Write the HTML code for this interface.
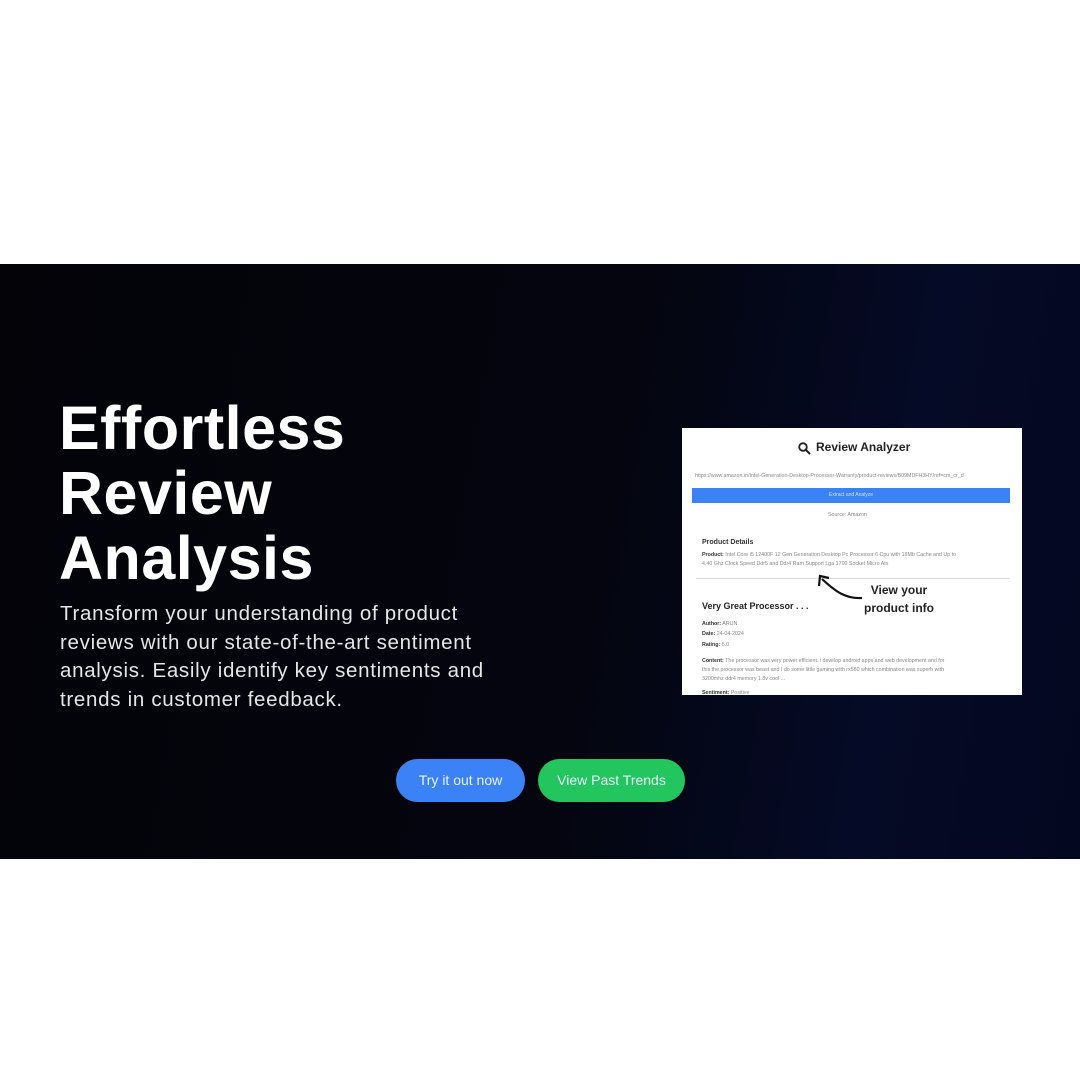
<!DOCTYPE html>
<html><head><meta charset="utf-8"><style>
*{margin:0;padding:0;box-sizing:border-box}
body{width:1080px;height:1080px;background:#fff;position:relative;overflow:hidden;font-family:"Liberation Sans",sans-serif}
.band{position:absolute;left:0;top:264px;width:1080px;height:595px;background:linear-gradient(100deg,#030308 0%,#04050f 55%,#050a26 80%,#040720 100%)}
h1{position:absolute;left:59px;top:396px;font-size:61px;line-height:65px;color:#fff;font-weight:bold;letter-spacing:0.5px}
p.d{position:absolute;left:60px;top:600px;width:480px;font-size:20.5px;line-height:28.5px;color:#e6e6e6;white-space:nowrap;letter-spacing:0.7px}
.panel{position:absolute;left:682px;top:428px;width:340px;height:267px;background:#fff;overflow:hidden;color:#333}
.btn{position:absolute;top:759px;height:43px;border-radius:22px;color:#e8f0ff;font-size:14px;line-height:43px;text-align:center}
.s{position:absolute;font-size:5.3px;color:#888;white-space:nowrap}
.b{font-weight:bold;color:#333}
</style></head><body>
<div class="band"></div>
<h1>Effortless<br>Review<br>Analysis</h1>
<p class="d">Transform your understanding of product<br>reviews with our state-of-the-art sentiment<br>analysis. Easily identify key sentiments and<br>trends in customer feedback.</p>
<div class="panel">
 <svg style="position:absolute;left:116px;top:14px" width="13" height="13" viewBox="0 0 13 13"><circle cx="5" cy="5" r="3.8" fill="none" stroke="#222" stroke-width="1.8"/><path d="M8 8L12 12" stroke="#222" stroke-width="2"/></svg>
 <div style="position:absolute;left:134px;top:12px;font-size:12px;font-weight:bold;color:#222">Review Analyzer</div>
 <div class="s" style="left:13px;top:45px">https://www.amazon.in/Intel-Generation-Desktop-Processor-Warranty/product-reviews/B09MDFH3HY/ref=cm_cr_d</div>
 <div style="position:absolute;left:10px;top:60px;width:318px;height:15px;background:#3b82f6;color:#cfe0ff;font-size:5px;text-align:center;line-height:15px">Extract and Analyze</div>
 <div class="s" style="left:146px;top:84px">Source: Amazon</div>
 <div style="position:absolute;left:20px;top:111px;font-size:7px;font-weight:bold;color:#333">Product Details</div>
 <div class="s" style="left:20px;top:124px"><span class="b">Product:</span> Intel Core i5 12400F 12 Gen Generation Desktop Pc Processor 6 Cpu with 18Mb Cache and Up to</div>
 <div class="s" style="left:20px;top:133px">4.40 Ghz Clock Speed Ddr5 and Ddr4 Ram Support Lga 1700 Socket Micro Atx</div>
 <div style="position:absolute;left:14px;top:150px;width:314px;border-top:1px solid #ddd"></div>
 <svg style="position:absolute;left:134px;top:146px" width="50" height="30" viewBox="0 0 50 30"><path d="M46 24C30 25 20 18 6 5" fill="none" stroke="#111" stroke-width="2.2"/><path d="M3 12L4 2L13 4" fill="none" stroke="#111" stroke-width="2.2"/></svg>
 <div style="position:absolute;left:182px;top:153px;font-size:12px;font-weight:bold;color:#222;text-align:center;line-height:18px">View your<br>product info</div>
 <div style="position:absolute;left:20px;top:173px;font-size:9px;font-weight:bold;color:#222">Very Great Processor . . .</div>
 <div class="s" style="left:20px;top:193px"><span class="b">Author:</span> ARUN</div>
 <div class="s" style="left:20px;top:203px"><span class="b">Date:</span> 24-04-2024</div>
 <div class="s" style="left:20px;top:214px"><span class="b">Rating:</span> 5.0</div>
 <div class="s" style="left:20px;top:230px"><span class="b">Content:</span> The processor was very power efficient. i develop android apps and web development and for</div>
 <div class="s" style="left:20px;top:239px">this the processor was beast and I do some little gaming with rx580 which combination was superb with</div>
 <div class="s" style="left:20px;top:248px">3200mhz ddr4 memory 1.8v cool ...</div>
 <div class="s" style="left:20px;top:262px"><span class="b">Sentiment:</span> Positive</div>
</div>
<div class="btn" style="left:396px;width:129px;background:#3b82f6">Try it out now</div>
<div class="btn" style="left:538px;width:147px;background:#22c55e">View Past Trends</div>
</body></html>
